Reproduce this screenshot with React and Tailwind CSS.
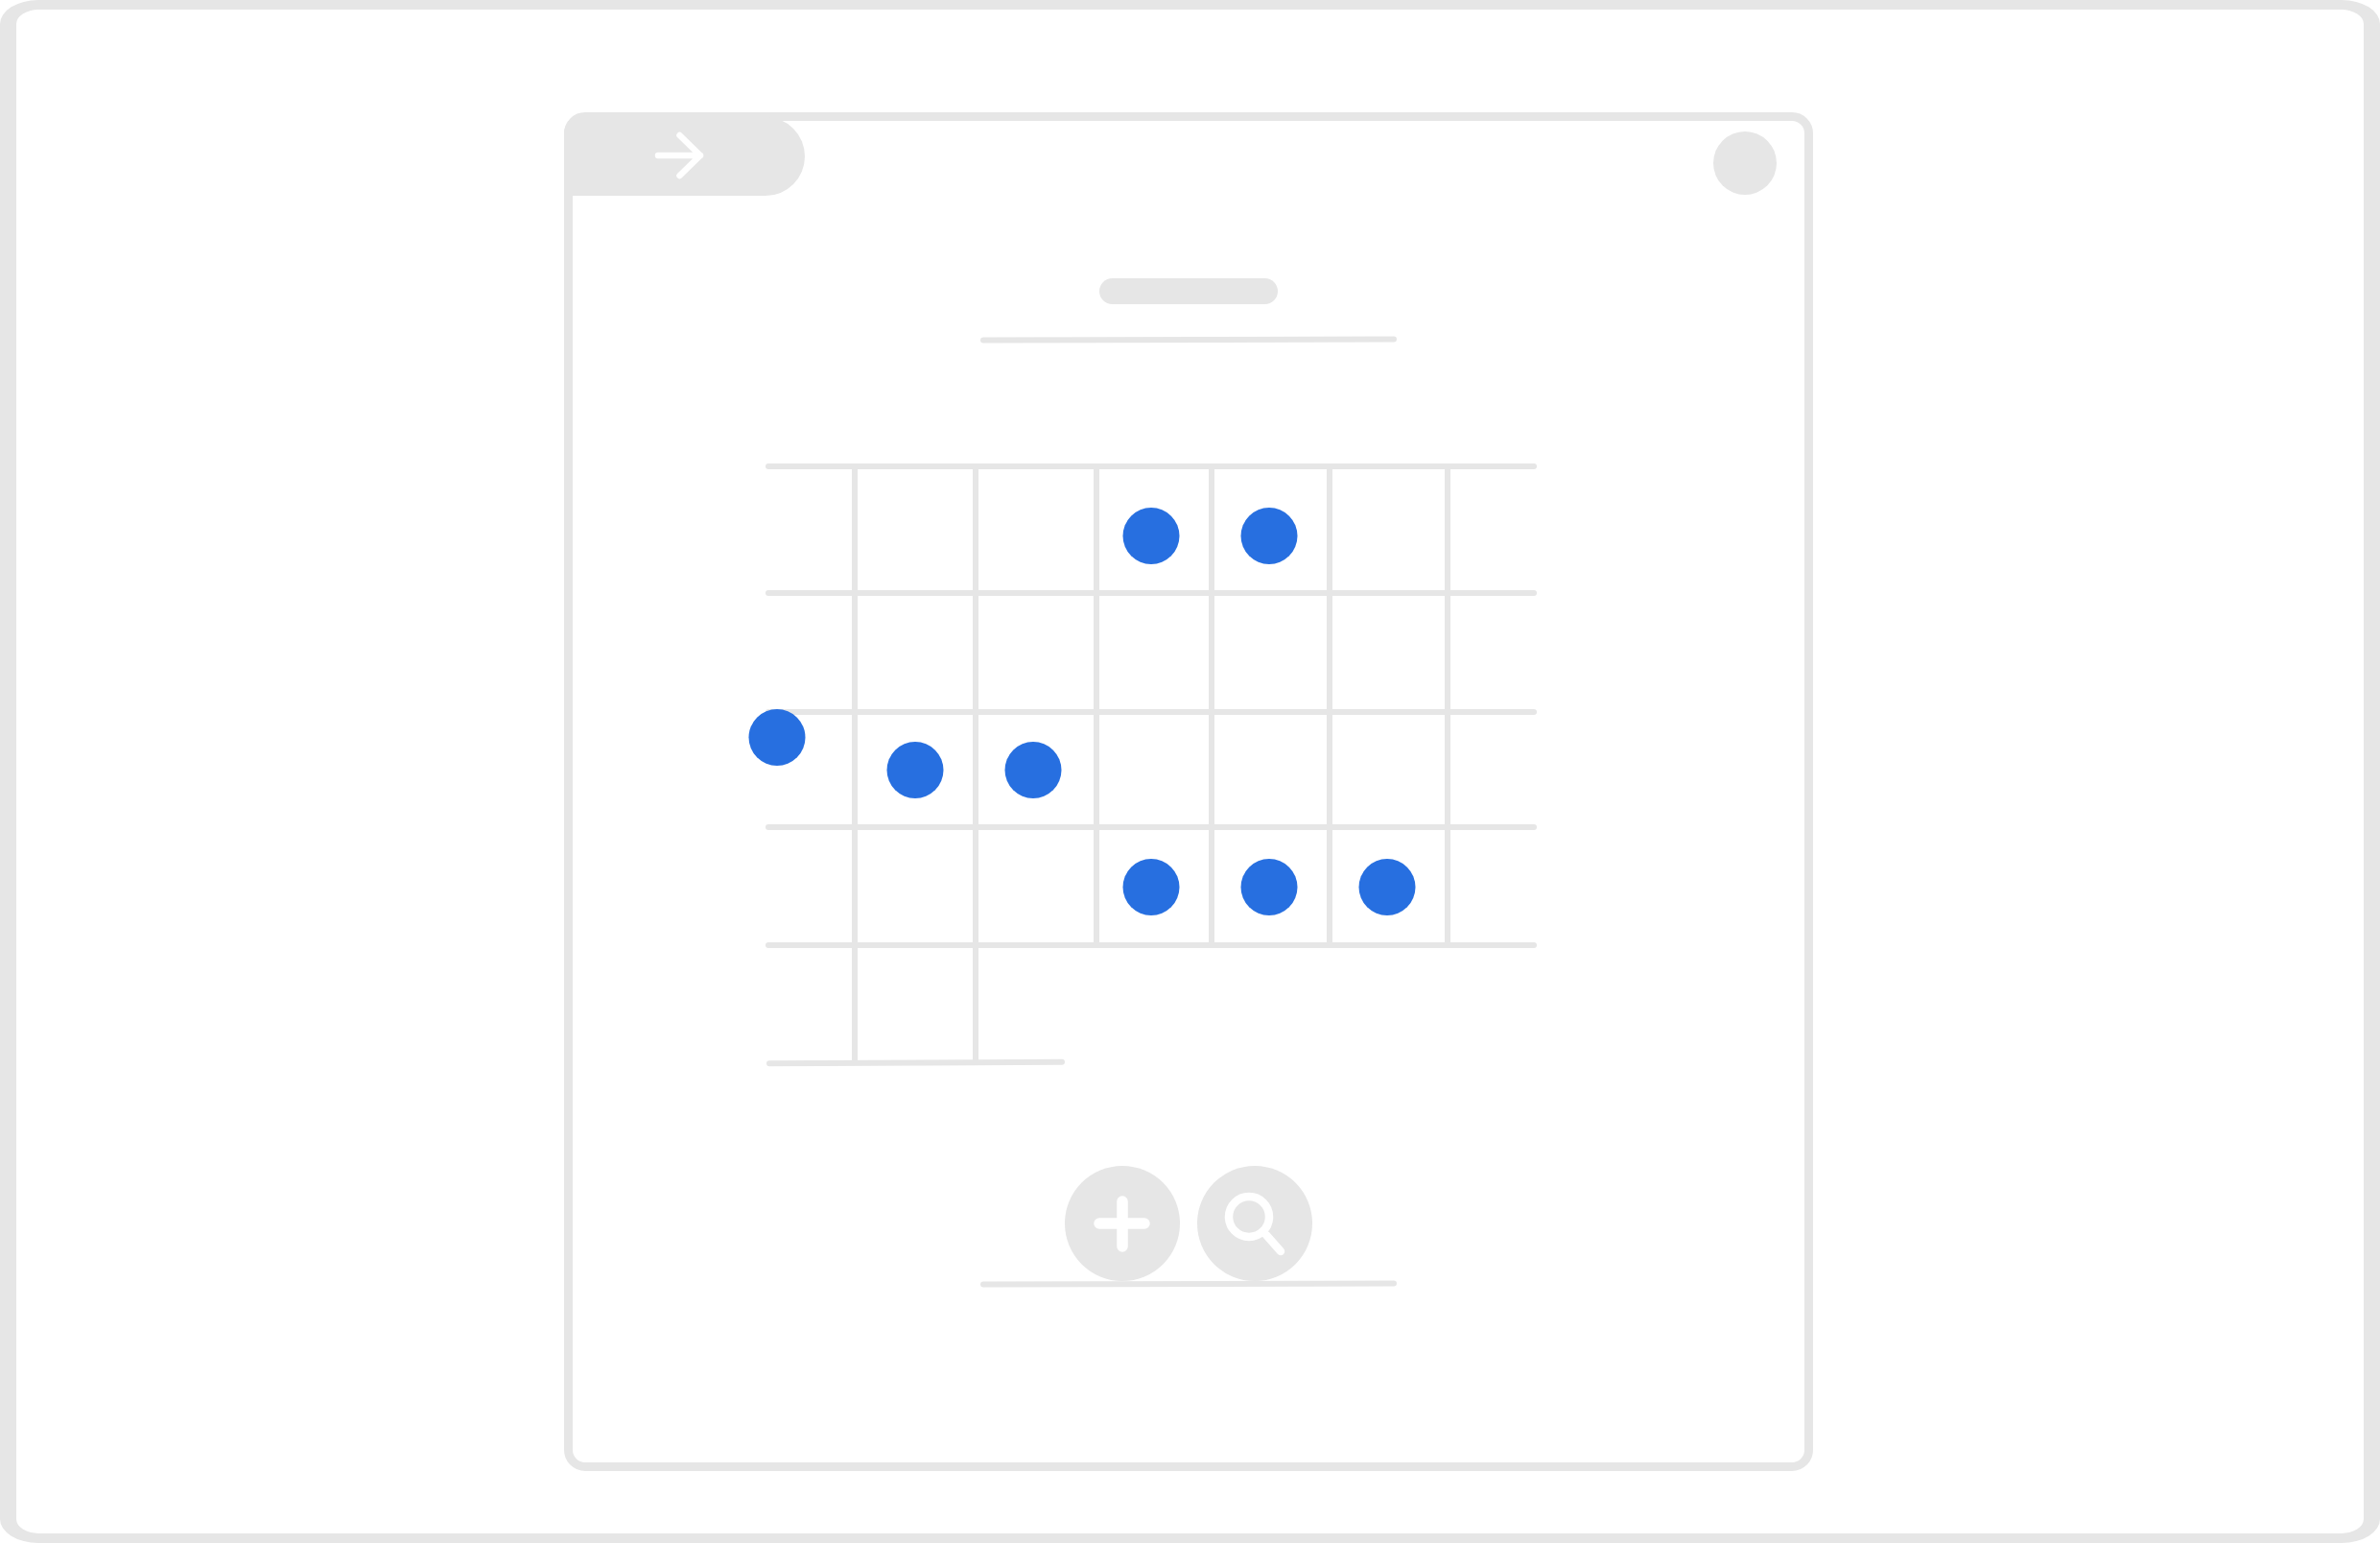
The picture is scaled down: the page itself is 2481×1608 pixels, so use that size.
const LINE = "#e6e6e6";
const rows = [483, 615, 739, 859, 982];
const longCols = [888, 1014];
const shortCols = [1140, 1260, 1383, 1506];
const dots = [[1200,558.5],[1323,558.5],[810,768.5],[954,802.5],[1077,802.5],[1200,924.5],[1323,924.5],[1446,924.5]];

function Board() {
  const ox = 781, oy = 483;
  return (
    <svg width="821" height="632" viewBox="0 0 821 632" className="block ml-[184px] self-start mt-[126px] overflow-visible">
      {rows.map((y) => (
        <rect key={y} x={798-ox} y={y-oy} width={804} height={6} rx={3} fill={LINE} />
      ))}
      <path d={`M${802-ox} ${1108.3-oy}L${1107-ox} ${1106.8-oy}`} stroke={LINE} strokeWidth="6" strokeLinecap="round" />
      {longCols.map((x) => (
        <rect key={x} x={x-ox} y={0} width={6} height={623} fill={LINE} />
      ))}
      {shortCols.map((x) => (
        <rect key={x} x={x-ox} y={0} width={6} height={503} fill={LINE} />
      ))}
      {dots.map(([x,y]) => (
        <circle key={x+"-"+y} cx={x-ox} cy={y-oy} r={29.5} fill="#276fe0" />
      ))}
    </svg>
  );
}

export default function App() {
  return (
    <div className="w-[2481px] h-[1608px] bg-white overflow-hidden">
      <div className="w-full h-full border-x-[17px] border-y-[10px] border-[#e6e6e6] rounded-[40px/25px] pt-[107px] pl-[571px]">
        <div className="w-[1302px] h-[1416px] border-[9px] border-[#e6e6e6] rounded-[22px] flex flex-col items-center">
          <div className="w-full flex justify-between items-start -mt-[4px]">
            <div className="-ml-[9px] w-[251px] h-[82px] bg-[#e6e6e6] rounded-tl-[17px] rounded-r-[41px] pl-[92px] pt-[15px]">
              <svg width="60" height="56" viewBox="0 0 60 56" fill="none" stroke="#fff" strokeWidth="6.5" strokeLinecap="round" strokeLinejoin="round">
                <path d="M6 25H50M28.5 4L50 25L28.5 46" />
              </svg>
            </div>
            <div className="mt-[15px] mr-[29px] w-[66px] h-[66px] rounded-full bg-[#e6e6e6]" />
          </div>
          <div className="mt-[86px] w-[186px] h-[27px] rounded-[13.5px] bg-[#e6e6e6]" />
          <div className="mt-[34px] w-[434px] h-[6px] rounded-full bg-[#e6e6e6] rotate-[-0.15deg]" />
          <Board />
          <div className="mt-[100px] flex gap-[18px]">
            <div className="w-[120px] h-[120px] rounded-full bg-[#e6e6e6] flex items-center justify-center">
              <svg width="120" height="120" viewBox="0 0 120 120" fill="none" stroke="#fff" strokeWidth="11.5" strokeLinecap="round">
                <path d="M36 60H83M60 37V84" />
              </svg>
            </div>
            <div className="w-[120px] h-[120px] rounded-full bg-[#e6e6e6] flex items-center justify-center">
              <svg width="120" height="120" viewBox="0 0 120 120" fill="none" stroke="#fff" strokeWidth="8.5" strokeLinecap="round">
                <circle cx="54" cy="53" r="21" />
                <path d="M72 72L87 89" />
              </svg>
            </div>
          </div>
          <div className="w-[434px] h-[6px] rounded-full bg-[#e6e6e6] rotate-[-0.15deg]" />
        </div>
      </div>
    </div>
  );
}
